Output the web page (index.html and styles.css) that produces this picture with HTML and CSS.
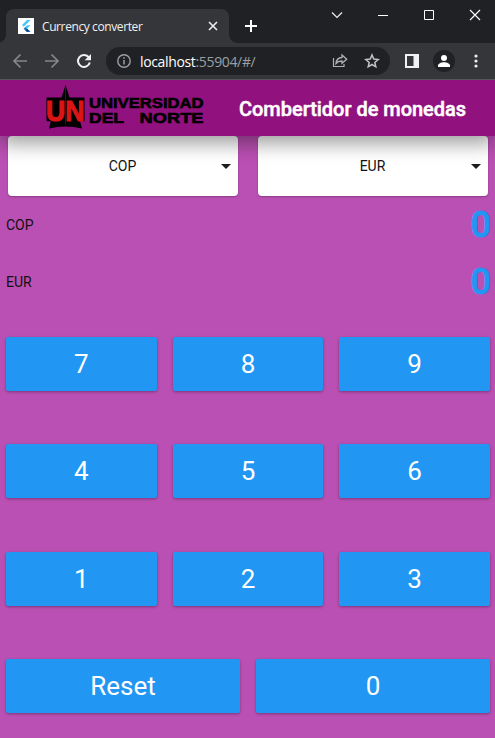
FILE: index.html
```html
<!DOCTYPE html>
<html lang="es">
<head>
<meta charset="utf-8">
<title>Currency converter</title>
<link rel="stylesheet" href="styles.css">
</head>
<body>
<div class="tabstrip">
  <div class="tab">
    <svg class="favicon" width="16" height="16" viewBox="0 0 16 16"><path fill="#fff" d="M0 0h16v16H0z"/><path fill="#45c5f8" d="M9 2h3.5L5.7 8.8 4 7.1zM9 7.2h3.5L9 10.7 7.3 9z"/><path fill="#1677c5" d="M7.3 9 5.6 10.7 8.8 13.8h3.5z"/><path fill="#0b4a80" d="m7.4 12.4 1.7-1.6 3.2 3H8.8z"/></svg>
    <span class="tab-title">Currency converter</span>
    <svg width="10" height="10" viewBox="0 0 10 10"><path d="m1 1 8 8m0-8L1 9" stroke="#eee" stroke-width="1.6"/></svg>
  </div>
  <svg class="new-tab" width="12" height="12" viewBox="0 0 12 12"><path d="M6 0v12M0 6h12" stroke="#fff" stroke-width="2"/></svg>
  <div class="window-controls">
    <svg width="12" height="12" viewBox="0 0 12 12"><path d="m1 3.500 5 5 5-5" fill="none" stroke="#eee" stroke-width="1.200"/></svg>
    <svg width="12" height="12" viewBox="0 0 12 12"><path d="M1 6.5h10" stroke="#fff"/></svg>
    <svg width="12" height="12" viewBox="0 0 12 12"><path d="M1.5 1.5h9v9h-9z" fill="none" stroke="#fff"/></svg>
    <svg width="12" height="12" viewBox="0 0 12 12"><path d="m1 1 10 10m0-10L1 11" stroke="#fff" stroke-width="1.2"/></svg>
  </div>
</div>
<div class="toolbar">
  <svg class="nav" width="16" height="16" viewBox="0 0 16 16"><path d="M15 8H2m6.5-6.5L2 8l6.5 6.5" fill="none" stroke="#85868a" stroke-width="1.7"/></svg>
  <svg class="nav" width="16" height="16" viewBox="0 0 16 16"><path d="M1 8h13M7.500 1.500 14 8l-6.500 6.500" fill="none" stroke="#85868a" stroke-width="1.700"/></svg>
  <svg class="nav" width="16" height="16" viewBox="0 0 16 16"><path d="M13.800 9.500A6 6 0 1 1 12.500 4L14 5.500" fill="none" stroke="#f1f1f1" stroke-width="2"/><path d="M15 1v6.300H8.700z" fill="#f1f1f1"/></svg>
  <div class="omnibox">
    <svg width="14" height="14" viewBox="0 0 14 14"><circle cx="7" cy="7" r="6.200" fill="none" stroke="#9aa0a6" stroke-width="1.400"/><path d="M7 6v4.500M7 3.300v1.500" stroke="#9aa0a6" stroke-width="1.500"/></svg>
    <span class="url"><b>localhost</b>:55904/#/</span>
    <svg class="share" width="16" height="16" viewBox="0 0 16 16"><path d="M1.500 5v8.500h10.500V11" fill="none" stroke="#b0b1b4" stroke-width="1.200"/><path d="M4 10.500c.3-3.800 2.300-5.800 6-6V2l4.700 4.200L10 10.300V8C7.300 7.900 5.400 8.700 4 10.500z" fill="none" stroke="#b0b1b4" stroke-width="1.300"/></svg>
    <svg class="star" width="16" height="16" viewBox="0 0 16 16"><path d="m8 2 1.750 4.100 4.400.4-3.350 2.900 1 4.400L8 11.500l-3.800 2.300 1-4.400L1.850 6.500l4.400-.4z" fill="none" stroke="#c2c3c6" stroke-width="1.500"/></svg>
  </div>
  <svg class="panel" width="14" height="14" viewBox="0 0 14 14"><path d="M0 0h14v14H0zM2 2v10h6.500V2z" fill="#f1f1f3" fill-rule="evenodd"/></svg>
  <svg class="profile" width="22" height="22" viewBox="0 0 22 22"><circle cx="11" cy="11" r="11" fill="#202124"/><circle cx="11" cy="8" r="3" fill="#fff"/><path d="M5 17v-1.500c0-2 3-3.300 6-3.300s6 1.300 6 3.300V17z" fill="#fff"/></svg>
  <svg class="menu" width="4" height="14" viewBox="0 0 4 14"><g fill="#eee"><circle cx="2" cy="2" r="1.600"/><circle cx="2" cy="7" r="1.600"/><circle cx="2" cy="12" r="1.600"/></g></svg>
</div>
<header class="appbar">
  <svg class="logo" width="160" height="48" viewBox="0 0 160 48" role="img" aria-label="Universidad del Norte">
    <path d="m20.500 1-4 12.500h-15v23.800h4.300L4 44.500q16.500-4 33 0l-2-7.200h4.500V13.500H24.500z"/>
    <path d="M20.500 3v37" stroke="#6e1160" stroke-width=".6"/>
    <g class="logo-mark"><text x="1" y="36.500" textLength="38.500" lengthAdjust="spacingAndGlyphs">UN</text></g>
    <g class="logo-name"><text x="44" y="24.200" textLength="114.500" lengthAdjust="spacingAndGlyphs">UNIVERSIDAD</text><text x="44" y="38.700" textLength="35" lengthAdjust="spacingAndGlyphs">DEL</text><text x="94.500" y="38.700" textLength="64" lengthAdjust="spacingAndGlyphs">NORTE</text></g>
  </svg>
  <h1>Combertidor de monedas</h1>
</header>
<main>
  <div class="selectors">
    <div class="select"><span>COP</span><i class="caret"></i></div>
    <div class="select"><span>EUR</span><i class="caret"></i></div>
  </div>
  <div class="amount"><span>COP</span><strong>0</strong></div>
  <div class="amount"><span>EUR</span><strong>0</strong></div>
  <div class="keypad">
    <div class="row"><button>7</button><button>8</button><button>9</button></div>
    <div class="row"><button>4</button><button>5</button><button>6</button></div>
    <div class="row"><button>1</button><button>2</button><button>3</button></div>
    <div class="row"><button>Reset</button><button>0</button></div>
  </div>
</main>
</body>
</html>
```
FILE: styles.css
```css
* { box-sizing: border-box; }
body {
  margin: 0;
  width: 495px;
  height: 738px;
  overflow: hidden;
  display: flex;
  flex-direction: column;
  background: #ba50b3;
  font-family: Roboto, sans-serif;
  color: #111;
}
svg { display: block; flex: none; }

.tabstrip {
  height: 43px;
  flex: none;
  display: flex;
  background: #202124;
  padding-left: 6px;
}
.tab {
  position: relative;
  width: 223px;
  height: 34px;
  margin-top: 9px;
  padding: 0 11px 0 12px;
  display: flex;
  align-items: center;
  background: #35363a;
  border-radius: 8px 8px 0 0;
}
.tab::before, .tab::after {
  content: "";
  position: absolute;
  bottom: 0;
  width: 8px;
  height: 8px;
}
.tab::before { left: -8px; background: radial-gradient(circle at 0 0, transparent 7.5px, #35363a 8px); }
.tab::after { right: -8px; background: radial-gradient(circle at 100% 0, transparent 7.5px, #35363a 8px); }
.tab-title {
  flex: 1;
  margin-left: 8px;
  font: 12px "Open Sans", sans-serif;
  letter-spacing: -0.4px;
  color: #f1f1f1;
}
.new-tab { margin: 20px 0 0 16px; }
.window-controls {
  margin: 9px 14px 0 auto;
  display: flex;
  gap: 34px;
}

.toolbar {
  height: 37px;
  flex: none;
  display: flex;
  align-items: center;
  padding: 0 12px;
  background: #35363a;
  border-bottom: 1px solid #55565a;
}
.nav { margin-right: 16px; }
.omnibox {
  width: 284px;
  height: 28px;
  margin-left: -2px;
  padding: 0 10px 0 11px;
  display: flex;
  align-items: center;
  border-radius: 14px;
  background: #202124;
}
.url {
  flex: 1;
  margin-left: 9px;
  font: 14px "Open Sans", sans-serif;
  letter-spacing: -0.35px;
  color: #9aa0a6;
}
.url b { font-weight: 400; color: #fff; }
.share { margin-right: 16px; }
.panel { margin-left: 15px; }
.profile { margin-left: 14px; }
.menu { margin-left: 19px; }

.appbar {
  position: relative;
  z-index: 1;
  height: 56px;
  flex: none;
  display: flex;
  align-items: center;
  padding-left: 45px;
  background: #91117e;
  box-shadow: 0 7px 20px #0006;
  clip-path: inset(0 0 -40px 0);
}
.logo-mark { font: bold 30px "Liberation Sans", sans-serif; fill: #dc1414; stroke: #dc1414; stroke-width: 1.2px; }
.logo-name { font: bold 15.300px "Liberation Sans", sans-serif; fill: #000; stroke: #000; stroke-width: .6px; }
h1 {
  margin: 2px 0 0 34px;
  font-size: 20px;
  font-weight: 500;
  letter-spacing: -0.03px;
  -webkit-text-stroke: .5px #fff;
  white-space: nowrap;
  color: #fff;
}

.selectors {
  display: grid;
  grid-template-columns: 1fr 1fr;
  gap: 20px;
  padding: 0 7px 0 8px;
}
.select {
  height: 60px;
  padding: 0 7px 0 16px;
  display: flex;
  align-items: center;
  background: #fff;
  border-radius: 4px;
  box-shadow: 0 1px 2px #0004;
  font-size: 14px;
}
.select span { flex: 1; text-align: center; }
.caret {
  border: 5px solid transparent;
  border-top-color: #1d1d1d;
  border-bottom: 0;
}
.amount {
  height: 57px;
  padding: 0 4px 0 6px;
  display: flex;
  align-items: center;
  justify-content: space-between;
  font-size: 14px;
}
.amount strong {
  font-size: 36px;
  font-weight: 500;
  -webkit-text-stroke: .9px #2196f3;
  color: #2196f3;
}
.keypad {
  display: grid;
  gap: 53.500px;
  padding: 26.800px 5px 0 6px;
}
.row {
  display: grid;
  grid-auto-flow: column;
  grid-auto-columns: 1fr;
  gap: 16px;
}
button {
  height: 54px;
  padding: 0;
  border: 0;
  border-radius: 2px;
  background: #2196f3;
  box-shadow: 0 1px 3px #0005;
  font: 26px Roboto, sans-serif;
  color: #fff;
}
```
